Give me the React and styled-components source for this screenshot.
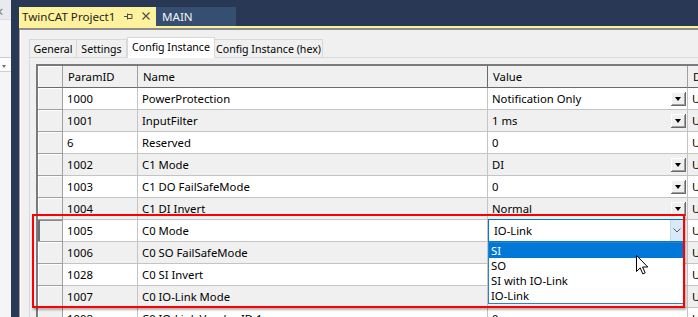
import React from "react";
import styled, { createGlobalStyle } from "styled-components";

const GlobalStyle = createGlobalStyle`
  html, body {
    margin: 0;
    padding: 0;
  }
  body {
    width: 698px;
    height: 317px;
    overflow: hidden;
    background: #f0f0f0;
    font-family: "Noto Sans", "Segoe UI", sans-serif;
    font-size: 11.3px;
    color: #000;
  }
`;

const rows = [
  { id: "1000", name: "PowerProtection", value: "Notification Only", drop: true },
  { id: "1001", name: "InputFilter", value: "1 ms", drop: true },
  { id: "6", name: "Reserved", value: "0" },
  { id: "1002", name: "C1 Mode", value: "DI", drop: true },
  { id: "1003", name: "C1 DO FailSafeMode", value: "0", drop: true },
  { id: "1004", name: "C1 DI Invert", value: "Normal", drop: true },
  { id: "1005", name: "C0 Mode", value: "IO-Link", editing: true },
  // values of the next rows sit under the open list
  { id: "1006", name: "C0 SO FailSafeMode", value: "" },
  { id: "1028", name: "C0 SI Invert", value: "" },
  { id: "1007", name: "C0 IO-Link Mode", value: "" },
  { id: "1008", name: "C0 IO-Link Vendor ID 1", value: "0" },
];

const options = ["SI", "SO", "SI with IO-Link", "IO-Link"];

const Screen = styled.div`
  display: flex;
  width: 698px;
  height: 317px;
  overflow: hidden;
`;

// left tool window, mostly cut off
const SidePanel = styled.div`
  flex: none;
  width: 11px;
  display: flex;
  flex-direction: column;
  background: #f5f5f5;
  overflow: hidden;
`;

const SideHeader = styled.div`
  box-sizing: border-box;
  height: 20px;
  padding-top: 4px;
  background: #e9eaee;
  border-bottom: 1px solid #dcdee6;
  color: #7d7d7d;
  font-size: 15px;
  line-height: 15px;
  text-indent: -5px;
`;

const SideBody = styled.div`
  flex: 1;
  padding-top: 37px;
`;

const SideCombo = styled.div`
  height: 15px;
  border-top: 1px solid #cccedb;
  border-bottom: 1px solid #cccedb;
  background: #fcfcfc;
  display: flex;
  align-items: center;
  padding: 3px 0 0 2px;
  box-sizing: border-box;

  &::after {
    content: "";
    border-style: solid;
    border-width: 3px 2.5px 0;
    border-color: #717171 transparent transparent;
  }
`;

const NavStrip = styled.div`
  flex: none;
  width: 8px;
  background: #293955;
`;

const Main = styled.div`
  flex: 1;
  min-width: 0;
  display: flex;
  flex-direction: column;
`;

const DocTabBar = styled.div`
  height: 26px;
  flex: none;
  display: flex;
  align-items: flex-end;
  background: #293955;
`;

const DocTab = styled.div`
  box-sizing: border-box;
  width: ${(p) => p.$w}px;
  height: 19px;
  display: flex;
  align-items: center;
  padding: 0 6px 1px ${(p) => (p.$active ? 3 : 6)}px;
  background: ${(p) => (p.$active ? "#fff29d" : "#364e6f")};
  color: ${(p) => (p.$active ? "#1e1e1e" : "#f2f4f8")};
  font-size: 11.6px;
  white-space: nowrap;
`;

const DocTools = styled.div`
  margin-left: auto;
  display: flex;
  align-items: center;
  gap: 9px;
`;

const DocRule = styled.div`
  flex: none;
  height: 2px;
  background: #fff29d;
  border-bottom: 2px solid #8c8c8c;
`;

const Pane = styled.div`
  flex: 1;
  display: flex;
  flex-direction: column;
  min-height: 0;
  overflow: hidden;
  background: #f0f0f0;
  border-left: 1px solid #9a9a9a;
  box-shadow: inset 1px 0 #fff;
`;

const TabStrip = styled.div`
  flex: none;
  box-sizing: border-box;
  height: 27px;
  display: flex;
  align-items: flex-end;
  padding: 7px 0 0 9px;
  position: relative;
  z-index: 1;
`;

const Tab = styled.div`
  box-sizing: border-box;
  width: ${(p) => p.$w}px;
  height: ${(p) => (p.$selected ? 21 : 18)}px;
  margin-bottom: ${(p) => (p.$selected ? -1 : 0)}px;
  display: flex;
  justify-content: center;
  align-items: center;
  padding-bottom: ${(p) => (p.$selected ? 3 : 0)}px;
  background: ${(p) => (p.$selected ? "#fff" : "#f0f0f0")};
  border: 1px solid #d9d9d9;
  border-bottom: none;
  border-left-width: ${(p) => (p.$first || p.$selected ? 1 : 0)}px;
  font-size: 10.6px;
  white-space: nowrap;
`;

const TabPage = styled.div`
  flex: 1;
  margin-left: 9px;
  padding: 6px 0 0 6px;
  border-top: 1px solid #d9d9d9;
  border-left: 1px solid #d9d9d9;
  background: #f0f0f0;
`;

const GridWrap = styled.div`
  position: relative;
`;

const Grid = styled.div`
  display: grid;
  grid-template-columns: 25px 75px 350px 200px 60px;
  grid-auto-rows: 22px;
  border-top: 2px solid #7a7a7a;
  border-left: 2px solid #7a7a7a;
  width: max-content;
`;

const Cell = styled.div`
  box-sizing: border-box;
  display: flex;
  align-items: center;
  padding-left: ${(p) => (p.$editing ? 0 : 4)}px;
  background: ${(p) => (p.$alt ? "#f0f0f0" : "#fff")};
  border-right: 1px solid #c4c4c4;
  border-bottom: 1px solid #c4c4c4;
  white-space: nowrap;
  overflow: ${(p) => (p.$editing ? "visible" : "hidden")};
`;

const HeadCell = styled(Cell)`
  background: #f0f0f0;
  border-bottom-color: #696969;
  border-right-color: ${(p) => (p.$dark ? "#696969" : "#a0a0a0")};
  padding-left: 5px;
`;

const RowHead = styled.div`
  box-sizing: border-box;
  background: #f0f0f0;
  border-right: 1px solid #a0a0a0;
  border-bottom: 1px solid ${(p) => (p.$top ? "#696969" : "#a0a0a0")};
  box-shadow: ${(p) =>
    p.$current ? "inset 2px 0 #6d6d6d, inset 0 1px #8a8a8a" : "inset 1px 1px #fff"};
`;

const CellText = styled.span`
  flex: 1;
  overflow: hidden;
`;

const DropButton = styled.div`
  flex: none;
  box-sizing: border-box;
  width: 15px;
  height: 14px;
  margin-right: 1px;
  display: flex;
  justify-content: center;
  align-items: center;
  background: #f0f0f0;
  box-shadow: inset -1px -1px #696969, inset 1px 1px #fff, inset -2px -2px #a0a0a0;

  &::after {
    content: "";
    margin: 1px 1px 0 0;
    border-style: solid;
    border-width: 4px 3.5px 0;
    border-color: #000 transparent transparent;
  }
`;

const Combo = styled.div`
  position: relative;
  z-index: 3;
  box-sizing: border-box;
  width: 196px;
  height: 23px;
  display: flex;
  background: #fff;
  border: 1px solid #0078d7;
`;

const ComboText = styled.div`
  flex: 1;
  display: flex;
  align-items: center;
  padding-left: 5px;
`;

const ComboArrow = styled.div`
  width: 12px;
  display: flex;
  justify-content: center;
  align-items: center;
  background: #d8e9f8;
  border-left: 1px solid #c0dcf3;
`;

const DropList = styled.div`
  position: absolute;
  top: calc(100% + 1px);
  left: -1px;
  width: 196px;
  box-sizing: border-box;
  background: #fff;
  border: 1px solid #2f7fcf;
`;

const Option = styled.div`
  height: 15px;
  line-height: 15px;
  padding-left: 2px;
  background: ${(p) => (p.$selected ? "#0078d7" : "transparent")};
  color: ${(p) => (p.$selected ? "#fff" : "#000")};
`;

const Highlight = styled.div`
  position: absolute;
  left: -4px;
  top: 150px;
  width: 653px;
  height: 94px;
  box-sizing: border-box;
  border: 2px solid #ff0000;
  box-shadow: 1px 2px 2px rgba(0, 0, 0, 0.3);
  pointer-events: none;
  z-index: 5;
`;

const Cursor = styled.svg`
  position: absolute;
  left: 600px;
  top: 191px;
  z-index: 6;
`;

function PinIcon() {
  return (
    <svg width="9" height="9" viewBox="0 0 9 9">
      <path d="M0 4.5h3M3.5 1.5v6M3.5 2.5h4.5v4h-4.5" fill="none" stroke="#4d4d4d" strokeWidth="1" />
    </svg>
  );
}

function CloseIcon() {
  return (
    <svg width="8" height="8" viewBox="0 0 8 8">
      <path d="M0.5 0.5l7 7M7.5 0.5l-7 7" stroke="#4d4d4d" strokeWidth="1.2" />
    </svg>
  );
}

function Chevron() {
  return (
    <svg width="8" height="5" viewBox="0 0 8 5">
      <path d="M0.5 0.5l3.5 3.5 3.5-3.5" fill="none" stroke="#606060" strokeWidth="1" />
    </svg>
  );
}

function ValueCell({ row, alt }) {
  if (row.editing) {
    return (
      <Cell $alt={alt} $editing>
        <Combo>
          <ComboText>{row.value}</ComboText>
          <ComboArrow>
            <Chevron />
          </ComboArrow>
          <DropList>
            {options.map((o, i) => (
              <Option key={o} $selected={i === 0}>
                {o}
              </Option>
            ))}
          </DropList>
        </Combo>
      </Cell>
    );
  }
  return (
    <Cell $alt={alt}>
      <CellText>{row.value}</CellText>
      {row.drop && <DropButton />}
    </Cell>
  );
}

export default function App() {
  return (
    <>
      <GlobalStyle />
      <Screen>
        <SidePanel>
          <SideHeader>×</SideHeader>
          <SideBody>
            <SideCombo />
          </SideBody>
        </SidePanel>
        <NavStrip />
        <Main>
          <DocTabBar>
            <DocTab $active $w={137}>
              TwinCAT Project1
              <DocTools>
                <PinIcon />
                <CloseIcon />
              </DocTools>
            </DocTab>
            <DocTab $w={80}>MAIN</DocTab>
          </DocTabBar>
          <DocRule />
          <Pane>
            <TabStrip>
              <Tab $first $w={48}>General</Tab>
              <Tab $w={50}>Settings</Tab>
              <Tab $selected $w={88}>Config Instance</Tab>
              <Tab $w={108}>Config Instance (hex)</Tab>
            </TabStrip>
            <TabPage>
              <GridWrap>
                <Grid>
                  <RowHead $top />
                  <HeadCell>ParamID</HeadCell>
                  <HeadCell $dark>Name</HeadCell>
                  <HeadCell>Value</HeadCell>
                  <HeadCell>D</HeadCell>
                  {rows.map((row, i) => {
                    const alt = i % 2 === 1;
                    return (
                      <React.Fragment key={row.id}>
                        <RowHead $current={row.editing} />
                        <Cell $alt={alt}>{row.id}</Cell>
                        <Cell $alt={alt}>{row.name}</Cell>
                        <ValueCell row={row} alt={alt} />
                        <Cell $alt={alt}>U</Cell>
                      </React.Fragment>
                    );
                  })}
                </Grid>
                <Highlight />
                <Cursor width="13" height="20" viewBox="0 0 13 20">
                  <path
                    d="M0.5 0.5v16l3.7-3.6 2.6 6 2.4-1-2.6-5.9h5.2z"
                    fill="#fff"
                    stroke="#000"
                    strokeWidth="1"
                    strokeLinejoin="round"
                  />
                </Cursor>
              </GridWrap>
            </TabPage>
          </Pane>
        </Main>
      </Screen>
    </>
  );
}
